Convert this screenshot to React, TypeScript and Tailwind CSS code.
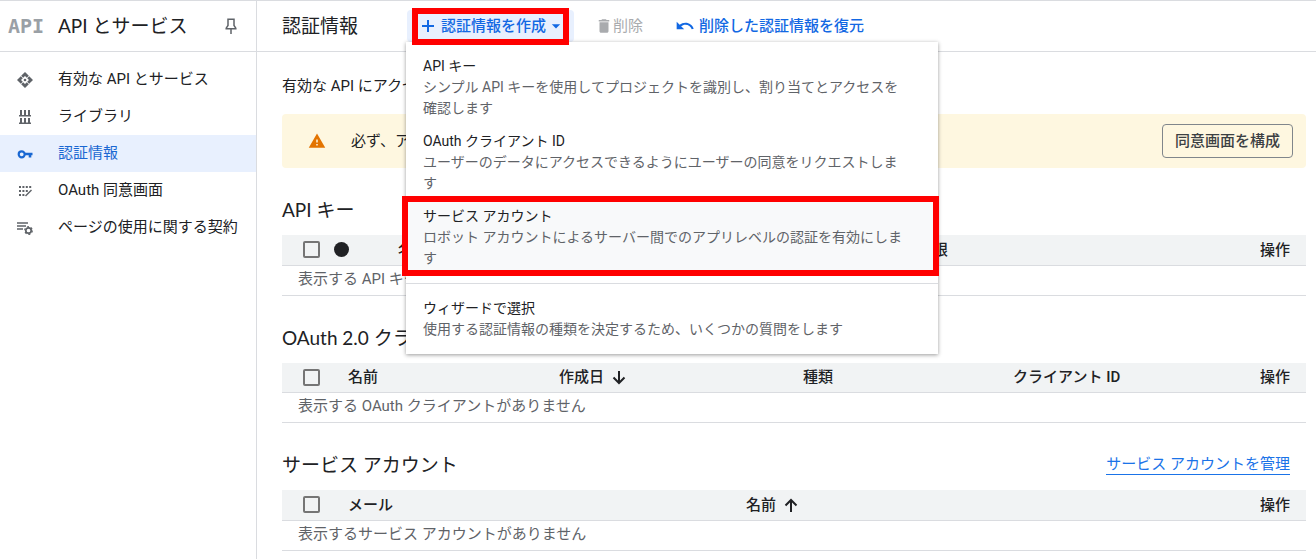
import React from "react";
import { MdArrowDropDown, MdDelete, MdUndo, MdWarning } from "react-icons/md";

interface Column {
  label: string;
  width: string;
  sort?: "up" | "down";
}

interface CredentialTableProps {
  title: string;
  columns: Column[];
  emptyText: string;
  status?: boolean;
  link?: string;
}

function PinIcon() {
  return (
    <svg width="18" height="18" viewBox="0 0 18 18" fill="none" stroke="currentColor" strokeWidth="1.5">
      <path d="M6 2.2h6v6.3l1.8 2.7v.6H4.2v-.6L6 8.5z" />
      <path d="M9 12v5" />
    </svg>
  );
}

function ApiIcon() {
  return (
    <svg width="18" height="18" viewBox="0 0 18 18" fill="currentColor">
      <circle cx="9" cy="9" r="1.3" />
      <path d="M9 1l3.8 3.8L10.800 6.800 9 5 7.200 6.800 5.200 4.800z" />
      <path d="M9 17l3.8-3.800-2-2L9 13l-1.800-1.800-2 2z" />
      <path d="M1 9l3.800-3.800 2 2L5 9l1.800 1.800-2 2z" />
      <path d="M17 9l-3.800-3.800-2 2L13 9l-1.800 1.800 2 2z" />
    </svg>
  );
}

function LibraryIcon() {
  return (
    <svg width="16" height="16" viewBox="0 0 16 16" fill="currentColor">
      <path d="M3 1h2v5h2V1h2v5h2V1h2v5h1v1.500H2V6h1zM3 9h2v4.500h2V9h2v4.500h2V9h2v4.500h1V15H2v-1.500h1z" />
    </svg>
  );
}

function KeyIcon() {
  return (
    <svg width="16" height="16" viewBox="0 0 16 16" fill="none" stroke="currentColor">
      <circle cx="4.700" cy="8.300" r="3" strokeWidth="2.200" />
      <path d="M8 8h7.500M13 8v3.500" strokeWidth="2.600" />
    </svg>
  );
}

function ConsentIcon() {
  return (
    <svg width="16" height="16" viewBox="0 0 16 16" fill="currentColor">
      <path d="M2 3h2v2H2zM5.400 3h2v2h-2zM8.800 3h2v2h-2zM12.200 3h2v2h-2zM2 7h2v2H2zM5.400 7h2v2h-2zM8.800 7h2v2h-2zM2 11h2v2H2zM5.400 11h2v2h-2z" />
      <path d="M8.500 13l6-6" stroke="currentColor" strokeWidth="1.5" />
    </svg>
  );
}

function AgreementIcon() {
  return (
    <svg width="18" height="16" viewBox="0 0 18 16" fill="none" stroke="currentColor">
      <path d="M1 3h11M1 6h9M1 9h6" strokeWidth="1.6" />
      <circle cx="12.5" cy="10.5" r="2.7" strokeWidth="1.7" />
      <circle cx="12.5" cy="10.5" r="3.8" strokeWidth="1.2" strokeDasharray="2 1.98" />
    </svg>
  );
}

function PlusIcon() {
  return (
    <svg width="18" height="18" viewBox="0 0 18 18" stroke="currentColor" strokeWidth="2">
      <path d="M9 3v12M3 9h12" />
    </svg>
  );
}

function SortIcon({ direction }: { direction: "up" | "down" }) {
  return (
    <svg
      width="14"
      height="16"
      viewBox="0 0 14 16"
      fill="none"
      stroke="currentColor"
      strokeWidth="2"
    >
      {direction === "down" ? (
        <path d="M7 2v12M1.500 8.500L7 14l5.500-5.500" />
      ) : (
        <path d="M7 15V3M1.500 8.500L7 3l5.500 5.500" />
      )}
    </svg>
  );
}

const navItems = [
  { label: "有効な API とサービス", icon: <ApiIcon /> },
  { label: "ライブラリ", icon: <LibraryIcon /> },
  { label: "認証情報", icon: <KeyIcon />, active: true },
  { label: "OAuth 同意画面", icon: <ConsentIcon /> },
  { label: "ページの使用に関する契約", icon: <AgreementIcon /> },
];

const menuItems = [
  {
    title: "API キー",
    lines: [
      "シンプル API キーを使用してプロジェクトを識別し、割り当てとアクセスを",
      "確認します",
    ],
  },
  {
    title: "OAuth クライアント ID",
    lines: [
      "ユーザーのデータにアクセスできるようにユーザーの同意をリクエストしま",
      "す",
    ],
  },
  {
    title: "サービス アカウント",
    lines: [
      "ロボット アカウントによるサーバー間でのアプリレベルの認証を有効にしま",
      "す",
    ],
    highlighted: true,
  },
  {
    title: "ウィザードで選択",
    lines: ["使用する認証情報の種類を決定するため、いくつかの質問をします"],
    divided: true,
  },
];

const tables: CredentialTableProps[] = [
  {
    title: "API キー",
    status: true,
    columns: [
      { label: "名前", width: "w-[260px]" },
      { label: "作成日", width: "w-[260px]", sort: "down" },
      { label: "制限", width: "w-[200px]" },
    ],
    emptyText: "表示する API キーがありません",
  },
  {
    title: "OAuth 2.0 クライアント ID",
    columns: [
      { label: "名前", width: "w-[211px]" },
      { label: "作成日", width: "w-[244px]", sort: "down" },
      { label: "種類", width: "w-[210px]" },
      { label: "クライアント ID", width: "w-[200px]" },
    ],
    emptyText: "表示する OAuth クライアントがありません",
  },
  {
    title: "サービス アカウント",
    link: "サービス アカウントを管理",
    columns: [
      { label: "メール", width: "w-[398px]" },
      { label: "名前", width: "w-[200px]", sort: "up" },
    ],
    emptyText: "表示するサービス アカウントがありません",
  },
];

function Sidebar() {
  return (
    <aside className="w-[257px] shrink-0 border-r border-[#dadce0]">
      <div className="flex h-[51px] items-center border-b border-[#dadce0] pr-4 pl-2">
        <span className="w-[50px] font-['DejaVu_Sans_Mono'] text-[20px] font-bold text-[#9aa0a6]">
          API
        </span>
        <h2 className="flex-1 font-[Lato,'Noto_Sans_CJK_JP',sans-serif] text-[19px]">
          API とサービス
        </h2>
        <button aria-label="メニューを固定" className="text-[#5f6368]">
          <PinIcon />
        </button>
      </div>
      <nav className="pt-[9px]">
        {navItems.map((item) => (
          <a
            key={item.label}
            href="#"
            className={
              item.active
                ? "flex h-[37px] items-center bg-[#e8f0fe] text-[15px] text-[#1967d2]"
                : "flex h-[37px] items-center text-[15px] text-[#202124]"
            }
          >
            <span
              className={
                item.active
                  ? "flex w-[50px] justify-center"
                  : "flex w-[50px] justify-center text-[#5f6368]"
              }
            >
              {item.icon}
            </span>
            <span className="pl-2">{item.label}</span>
          </a>
        ))}
      </nav>
    </aside>
  );
}

function CreateMenu() {
  return (
    <ul
      role="menu"
      className="absolute top-8 -left-px z-10 w-[532px] bg-white py-2 text-sm/[21px] font-normal shadow-[0_1px_4px_rgba(0,0,0,0.4)]"
    >
      {menuItems.map((item) => (
        <li
          key={item.title}
          role="none"
          className={item.divided ? "mt-2 border-t border-[#dadce0] pt-2" : ""}
        >
          <a
            href="#"
            role="menuitem"
            className={
              item.highlighted
                ? "relative block bg-[#f8f9fa] px-[17px] py-1.5"
                : "block px-[17px] py-1.5"
            }
          >
            <span className="block text-[#202124]">{item.title}</span>
            {item.lines.map((line) => (
              <span key={line} className="block whitespace-nowrap text-[#5f6368]">
                {line}
              </span>
            ))}
            {item.highlighted && (
              <span className="absolute -top-1 -right-px -bottom-px -left-1 border-6 border-[#ff0000]" />
            )}
          </a>
        </li>
      ))}
    </ul>
  );
}

function Toolbar() {
  return (
    <header className="flex h-[51px] items-center border-b border-[#dadce0] pl-[25px] text-[15px] font-medium">
      <h1 className="w-[125px] font-[Lato,'Noto_Sans_CJK_JP',sans-serif] text-[19px] font-normal">
        認証情報
      </h1>
      <div className="relative">
        <button
          aria-haspopup="menu"
          aria-expanded="true"
          className="flex h-8 w-[167px] items-center rounded bg-[#e8f0fe] pl-3 text-[#1268e3]"
        >
          <PlusIcon />
          <span className="pl-1">認証情報を作成</span>
          <MdArrowDropDown size={20} />
        </button>
        <span className="absolute -top-0.5 right-[5px] -bottom-[3px] left-[5px] z-20 border-6 border-[#ff0000]" />
        <CreateMenu />
      </div>
      <button disabled className="ml-[21px] flex items-center font-normal text-[#a9abae]">
        <MdDelete size={18} />
        削除
      </button>
      <button className="ml-8 flex items-center gap-1 text-[#1268e3]">
        <MdUndo size={20} />
        削除した認証情報を復元
      </button>
    </header>
  );
}

function CredentialTable({ title, columns, emptyText, status, link }: CredentialTableProps) {
  return (
    <section className="mt-[30px]">
      <div className="flex items-center justify-between pr-4">
        <h2 className="font-[Lato,'Noto_Sans_CJK_JP',sans-serif] text-[19px]/[24px]">{title}</h2>
        {link && (
          <a href="#" className="border-b border-[#1a73e8] text-[15px]/[19px] text-[#1a73e8]">
            {link}
          </a>
        )}
      </div>
      <table className="mt-[13px] w-full table-fixed border-collapse text-left text-[15px]/[20px]">
        <thead>
          <tr className="h-[30px] border-b border-[#dadce0] bg-[#f1f3f4]">
            <th className={status ? "w-[116px] pl-[21px]" : "w-[66px] pl-[21px]"}>
              <span className="flex items-center gap-[14px]">
                <input
                  type="checkbox"
                  aria-label="すべて選択"
                  className="size-[17px] appearance-none rounded-xs border-2 border-[#757575]"
                />
                {status && <span className="size-[15px] rounded-full bg-[#202124]" />}
              </span>
            </th>
            {columns.map((column) => (
              <th key={column.label} className={`${column.width} font-medium`}>
                <span className="flex items-center gap-2">
                  {column.label}
                  {column.sort && <SortIcon direction={column.sort} />}
                </span>
              </th>
            ))}
            <th className="pr-4 text-right font-medium">操作</th>
          </tr>
        </thead>
        <tbody>
          <tr className="h-[30px] border-b border-[#dadce0]">
            <td colSpan={columns.length + 2} className="pb-[3px] pl-4 text-[#5f6368]">
              {emptyText}
            </td>
          </tr>
        </tbody>
      </table>
    </section>
  );
}

export default function App() {
  return (
    <div className="flex min-h-screen border-t border-[#dadce0] bg-white font-[Roboto,'Noto_Sans_CJK_JP',sans-serif] text-[#202124]">
      <Sidebar />
      <main className="min-w-0 flex-1">
        <Toolbar />
        <div className="pr-[10px] pl-[25px]">
          <p className="pt-6 text-[15px]/[20px]">
            有効な API にアクセスするための認証情報を作成します。
          </p>
          <div className="mt-[18px] flex h-[54px] items-center rounded bg-[#fef7e0] pr-[13px] pl-[26px] text-[15px]">
            <MdWarning size={18} className="text-[#e37400]" />
            <p className="flex-1 pl-[25px]">
              必ず、アプリケーションに関する情報を使用して OAuth 同意画面を構成してください。
            </p>
            <button className="h-[34px] rounded border border-[#80868b] px-3 font-medium text-[#3c4043]">
              同意画面を構成
            </button>
          </div>
          {tables.map((table) => (
            <CredentialTable key={table.title} {...table} />
          ))}
        </div>
      </main>
    </div>
  );
}
